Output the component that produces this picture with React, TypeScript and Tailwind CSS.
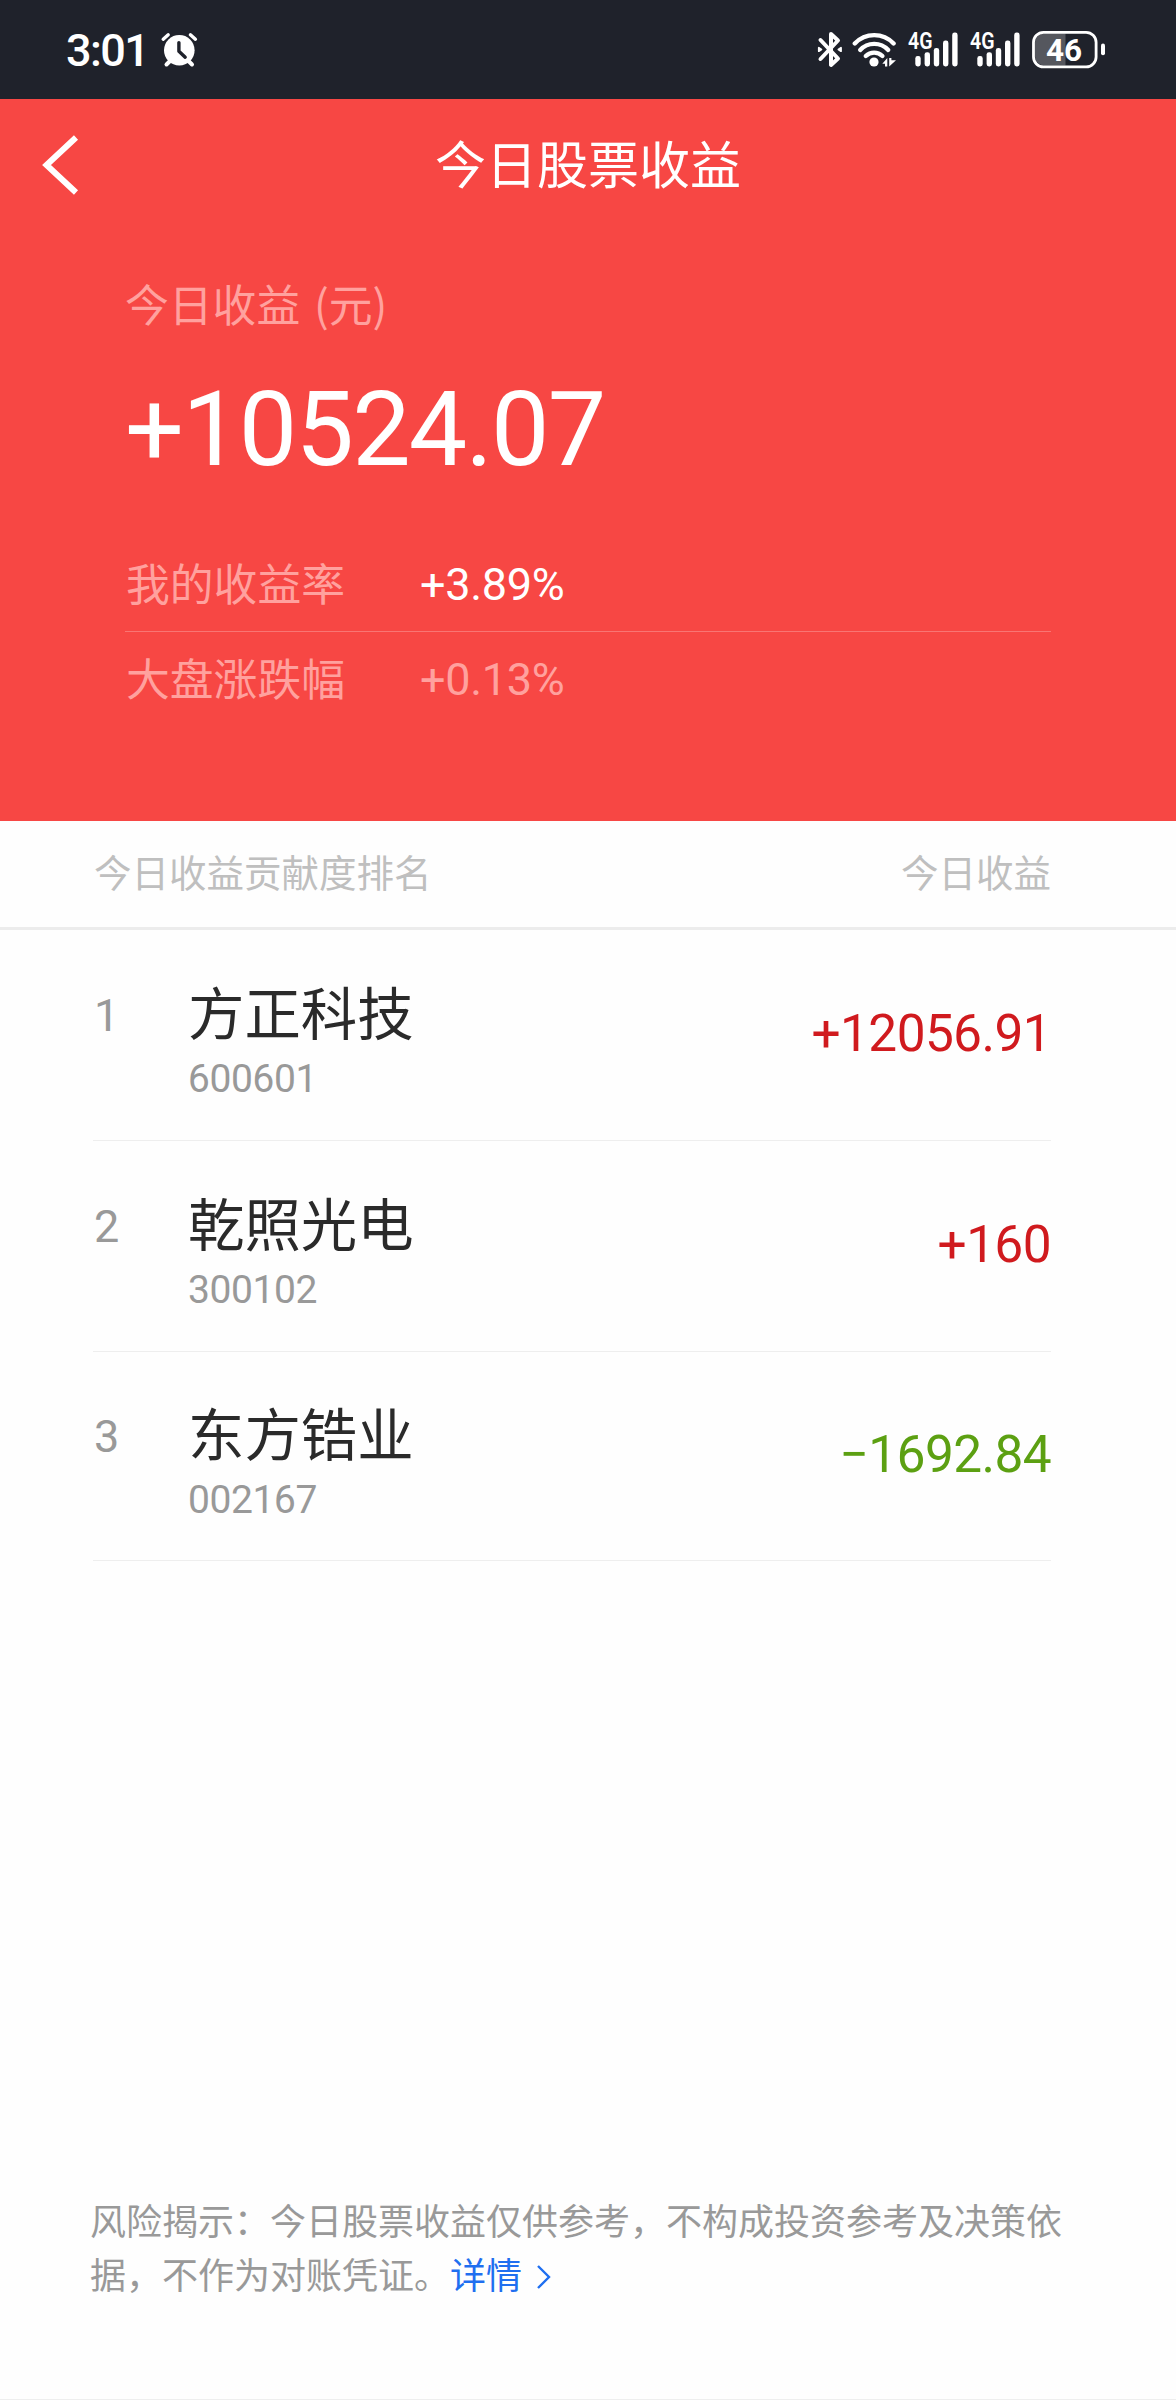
import { clsx } from 'clsx';
import type { ReactNode } from 'react';

interface Stock {
  rank: number;
  name: string;
  code: string;
  profit: number;
}

const stocks: Stock[] = [
  { rank: 1, name: '方正科技', code: '600601', profit: 12056.91 },
  { rank: 2, name: '乾照光电', code: '300102', profit: 160 },
  { rank: 3, name: '东方锆业', code: '002167', profit: -1692.84 },
];

function formatProfit(value: number) {
  return value >= 0 ? `+${value}` : `−${Math.abs(value)}`;
}

function Figures({ children, className }: { children: ReactNode; className?: string }) {
  return <span className={clsx('whitespace-nowrap font-[Roboto,sans-serif] tabular-nums', className)}>{children}</span>;
}

function AlarmIcon() {
  return (
    <svg width="38" height="36" viewBox="0 0 38 36" fill="none" strokeLinecap="round">
      <path d="M3.2 7.2L8.2 2.8M30.4 2.8L35.4 7.2" stroke="#fff" strokeWidth="3.4" />
      <path d="M6.5 32.5L11 28M32 32.5L27.5 28" stroke="#fff" strokeWidth="4" />
      <circle cx="19.3" cy="18.2" r="15.3" fill="#fff" />
      <path d="M18.9 10.6V19.2L25.2 25.2" stroke="#1f222b" strokeWidth="3.4" strokeLinejoin="round" />
    </svg>
  );
}

function BluetoothIcon() {
  return (
    <svg width="28" height="37" viewBox="0 0 28 37" fill="none" stroke="#fff" strokeLinejoin="round" strokeLinecap="round">
      <path d="M4.5 9L22 27.5L15 34V3L22 9.5L4.5 28" strokeWidth="4" />
      <path d="M2.8 16.8V20.2L5.4 18.5ZM25 16.8V20.2L22.4 18.5Z" fill="#fff" strokeWidth="1.8" />
    </svg>
  );
}

function WifiIcon() {
  return (
    <svg width="46" height="37" viewBox="0 0 46 37" fill="none" stroke="#fff" strokeWidth="4.4" strokeLinecap="round">
      <path d="M2.8 12.5A26.6 26.6 0 0 1 41.6 12.5" />
      <path d="M8.2 19A19 19 0 0 1 36.2 19" />
      <path d="M13.8 25A12 12 0 0 1 30.4 25" />
      <circle cx="22" cy="31" r="4.6" fill="#fff" stroke="none" />
      <path d="M30.3 32.8L35.3 27V35.4H33V32.8ZM37.2 27H39.4V29.2H44L37.2 35.4Z" fill="#fff" stroke="none" />
    </svg>
  );
}

const bars = [
  { x: 7.3, y: 25 },
  { x: 16.6, y: 21.2 },
  { x: 25.8, y: 17 },
  { x: 35, y: 9.6 },
  { x: 44.2, y: 1.6 },
];

function SignalIcon() {
  return (
    <svg className="overflow-visible" width="50" height="37" viewBox="0 0 50 37" fill="#fff">
      <text x="0" y="18.4" fontFamily="Roboto, sans-serif" fontSize="23.4" fontWeight="600" textLength="24.5" lengthAdjust="spacingAndGlyphs">
        4G
      </text>
      {bars.map((bar) => (
        <rect key={bar.x} x={bar.x} y={bar.y} width="5.4" height={35.4 - bar.y} rx="2.4" />
      ))}
    </svg>
  );
}

function BatteryIcon() {
  return (
    <svg width="74" height="39" viewBox="0 0 74 39" fill="none">
      <path d="M33.5 3.5V35.5H12A9 9 0 0 1 3 26.5V12.5A9 9 0 0 1 12 3.5Z" fill="#55575e" />
      <rect x="1.5" y="2.3" width="62.6" height="34.6" rx="10" stroke="#fff" strokeWidth="2.8" />
      <rect x="69" y="13.6" width="4" height="11.6" rx="2" fill="#fff" />
      <text x="14" y="30.8" fill="#fff" fontFamily="Roboto, sans-serif" fontSize="31.5" fontWeight="700">
        46
      </text>
    </svg>
  );
}

function StatusBar() {
  return (
    <header className="flex h-[99px] items-center justify-between bg-[#1f222b] pl-[66px] pr-[70px] text-white">
      <div className="flex items-center">
        <Figures className="w-[94px] pt-0.5 text-[45px] leading-[44px] font-medium tracking-[-1.6px]">3:01</Figures>
        <AlarmIcon />
      </div>
      <div className="flex items-center">
        <BluetoothIcon />
        <div className="ml-2">
          <WifiIcon />
        </div>
        <div className="ml-2.5">
          <SignalIcon />
        </div>
        <div className="ml-3">
          <SignalIcon />
        </div>
        <div className="ml-3">
          <BatteryIcon />
        </div>
      </div>
    </header>
  );
}

function RateRow({ label, value, dim }: { label: string; value: string; dim?: boolean }) {
  return (
    <div className="flex h-[94px] items-center">
      <span className="w-[295px] pb-1 pl-px text-[43.8px] leading-[60px] text-[#ffa19e]">{label}</span>
      <Figures className={clsx('pt-px text-[45px] leading-[60px] tracking-[-0.3px]', dim ? 'text-[#ffa19e]' : 'text-white')}>
        {value}
      </Figures>
    </div>
  );
}

function Summary() {
  return (
    <section className="h-[722px] bg-[#f74744]">
      <div className="grid h-[132px] grid-cols-[1fr_auto_1fr] items-center">
        <button className="ml-10 w-10" aria-label="返回">
          <svg width="40" height="62" viewBox="0 0 40 62" fill="none" stroke="#fff" strokeWidth="6">
            <path d="M36 3.5L6.5 31L36 58.5" />
          </svg>
        </button>
        <h1 className="pb-1.5 text-[51px] leading-[60px] text-white">今日股票收益</h1>
      </div>

      <div className="px-[125px]">
        <p className="pt-[42px] text-[43.8px] leading-[60px] text-[#ffa19e] [word-spacing:4px]">今日收益 (元)</p>
        <Figures className="mt-[42px] block text-[104px] leading-[110px] tracking-[-1.8px] text-white">+10524.07</Figures>
        <div className="mt-[52px]">
          <RateRow label="我的收益率" value="+3.89%" />
          <div className="h-px bg-white/25" />
          <RateRow label="大盘涨跌幅" value="+0.13%" dim />
        </div>
      </div>
    </section>
  );
}

function StockRow({ stock }: { stock: Stock }) {
  return (
    <li className="flex h-[211px] border-b border-[#eeeeee] pt-[51px] last:h-[209px] last:pt-[50px]">
      <Figures className="w-[95px] pl-px text-[45px] leading-[70px] text-[#999999]">{stock.rank}</Figures>
      <div className="flex-1">
        <p className="text-[56.4px] leading-[60px] text-[#2a2a2a]">{stock.name}</p>
        <Figures className="mt-2 block text-[39px] leading-[60px] tracking-[-0.4px] text-[#999999]">{stock.code}</Figures>
      </div>
      <Figures
        className={clsx(
          'text-[51.4px] leading-[106px] tracking-[-0.6px]',
          stock.profit >= 0 ? 'text-[#d01a1e]' : 'text-[#5ca012]'
        )}
      >
        {formatProfit(stock.profit)}
      </Figures>
    </li>
  );
}

export default function App() {
  return (
    <div className="flex h-[2400px] w-[1176px] flex-col overflow-hidden border-b border-[#eeeeee] bg-[#fefefe] font-['Noto_Sans_CJK_SC',sans-serif]">
      <StatusBar />
      <Summary />

      <div className="flex h-[109px] items-center justify-between border-b-3 border-[#ececec] pr-[125px] pb-1.5 pl-[94px] text-[37.5px] leading-[50px] text-[#bfbfbf]">
        <span>今日收益贡献度排名</span>
        <span>今日收益</span>
      </div>

      <ul className="ml-[93px] w-[958px]">
        {stocks.map((stock) => (
          <StockRow key={stock.code} stock={stock} />
        ))}
      </ul>

      {/* Risk notice */}
      <p className="mt-auto mb-[99px] ml-[90px] w-[978px] text-[36px] leading-[54px] text-[#999999]">
        风险揭示：今日股票收益仅供参考，不构成投资参考及决策依据，不作为对账凭证。
        <a className="text-[#1f6ff0]">
          详情
          <svg className="ml-3.5 inline-block align-[-1px]" width="16" height="26" viewBox="0 0 16 26" fill="none" stroke="currentColor" strokeWidth="2.4">
            <path d="M2 2L13 13L2 24" />
          </svg>
        </a>
      </p>
    </div>
  );
}
